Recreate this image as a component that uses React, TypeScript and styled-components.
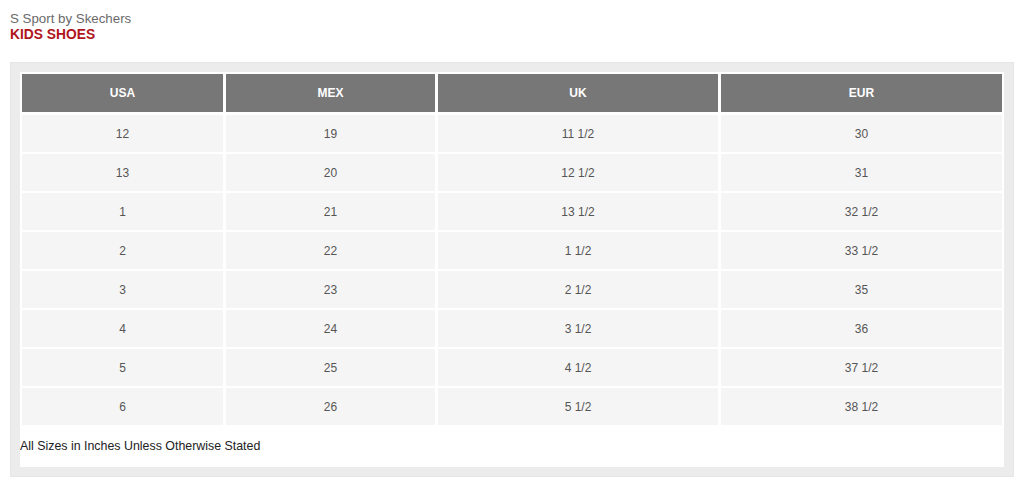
import React from 'react';
import styled, { createGlobalStyle } from 'styled-components';

const GlobalStyle = createGlobalStyle`
  body {
    margin: 0;
    background: #ffffff;
    font-family: "Liberation Sans", Arial, sans-serif;
  }
`;

const Page = styled.div`
  padding: 11px 10px 0 10px;
  width: 1004px;
`;

const Brand = styled.div`
  font-size: 13.3px;
  line-height: 16px;
  color: #6a6a6a;
`;

const Heading = styled.div`
  font-size: 13.8px;
  line-height: 16px;
  font-weight: bold;
  color: #b0141c;
`;

const Panel = styled.section`
  margin-top: 19px;
  background: #ececec;
  border: 1px solid #e6e6e6;
  box-sizing: border-box;
  width: 1004px;
  padding: 9px 9px 9px 9px;
`;

const Inner = styled.div`
  background: #ffffff;
  padding: 2px 2px 0 2px;
`;

const Grid = styled.div`
  display: grid;
  grid-template-columns: 201px 209px 280px 281px;
  column-gap: 3px;
  row-gap: 2px;
`;

const HeadCell = styled.div`
  background: #777777;
  color: #ffffff;
  font-weight: bold;
  font-size: 12px;
  height: 38px;
  margin-bottom: 1px;
  display: flex;
  align-items: center;
  justify-content: center;
`;

const Cell = styled.div`
  background: #f5f5f5;
  color: #555555;
  font-size: 12px;
  height: 37px;
  display: flex;
  align-items: center;
  justify-content: center;
`;

const Note = styled.div`
  font-size: 12.4px;
  color: #222222;
  height: 42px;
  display: flex;
  align-items: center;
  margin-left: -2px;
`;

const headers = ['USA', 'MEX', 'UK', 'EUR'];

const rows = [
  ['12', '19', '11 1/2', '30'],
  ['13', '20', '12 1/2', '31'],
  ['1', '21', '13 1/2', '32 1/2'],
  ['2', '22', '1 1/2', '33 1/2'],
  ['3', '23', '2 1/2', '35'],
  ['4', '24', '3 1/2', '36'],
  ['5', '25', '4 1/2', '37 1/2'],
  ['6', '26', '5 1/2', '38 1/2'],
];

function App() {
  return (
    <>
      <GlobalStyle />
      <Page>
        <Brand>S Sport by Skechers</Brand>
        <Heading>KIDS SHOES</Heading>
        <Panel>
          <Inner>
            <Grid>
              {headers.map(h => (
                <HeadCell key={h}>{h}</HeadCell>
              ))}
              {rows.map((r, i) =>
                r.map((v, j) => <Cell key={`${i}-${j}`}>{v}</Cell>)
              )}
            </Grid>
            <Note>All Sizes in Inches Unless Otherwise Stated</Note>
          </Inner>
        </Panel>
      </Page>
    </>
  );
}

export default App;
